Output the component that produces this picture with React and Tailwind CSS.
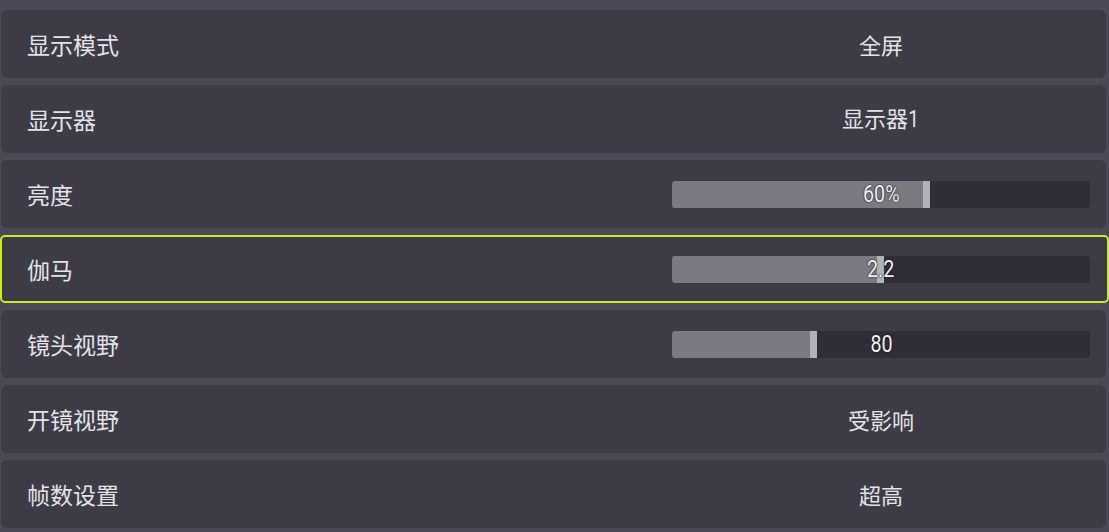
import React from 'react';

const rows = [
  { label: '显示模式', value: '全屏' },
  { label: '显示器', value: '显示器1' },
  { label: '亮度', slider: 60, text: '60%' },
  { label: '伽马', slider: 49, text: '2.2', active: true },
  { label: '镜头视野', slider: 33, text: '80' },
  { label: '开镜视野', value: '受影响' },
  { label: '帧数设置', value: '超高' },
];

const cjk = { fontFamily: '"Noto Sans CJK SC", "Noto Sans", sans-serif' };
const num = { fontFamily: '"Roboto", "Noto Sans", sans-serif' };

function Slider({ pct, text }) {
  return (
    <div className="relative h-[27px] w-[418px] rounded-[3px] bg-[#2f2d37]">
      <div className="flex h-full items-stretch">
        <div className="rounded-l-[3px] bg-[#7b7981]" style={{ width: `${pct}%` }} />
        <div className="w-[7px] bg-[#b3b1b8]" />
      </div>
      <div className="absolute inset-0 flex items-center justify-center">
        <span
          className="inline-block scale-x-[0.82] text-[24px] leading-none text-[#f2f2f4] [text-shadow:0_0_2px_#1a1a20,0_0_1px_#1a1a20]"
          style={num}
        >
          {text}
        </span>
      </div>
    </div>
  );
}

export default function App() {
  return (
    <div className="flex h-[532px] w-[1109px] flex-col gap-[7px] overflow-hidden bg-[#4b4956] pt-[10px]">
      {rows.map((r) => (
        <div
          key={r.label}
          className={
            r.active
              ? 'flex h-[68px] w-[1109px] shrink-0 items-center rounded-[5px] border-2 border-[#c4ee2a] bg-[#3d3b46] pl-[25px]'
              : 'ml-px flex h-[68px] w-[1105px] shrink-0 items-center rounded-[6px] bg-[#3d3b46] pl-[26px]'
          }
        >
          <span className="flex-1 text-[23px] text-[#e4e3e8]" style={cjk}>
            {r.label}
          </span>
          <div className={r.active ? 'mr-[17px] flex w-[418px] justify-center' : 'mr-[16px] flex w-[418px] justify-center'}>
            {r.slider != null ? (
              <Slider pct={r.slider} text={r.text} />
            ) : (
              <span className="flex items-baseline text-[22px] text-[#e4e3e8]" style={cjk}>
                {r.value.replace('1', '')}
                {r.value.endsWith('1') && (
                  <span className="-ml-px inline-block scale-x-[0.82] text-[23px]" style={num}>1</span>
                )}
              </span>
            )}
          </div>
        </div>
      ))}
    </div>
  );
}
